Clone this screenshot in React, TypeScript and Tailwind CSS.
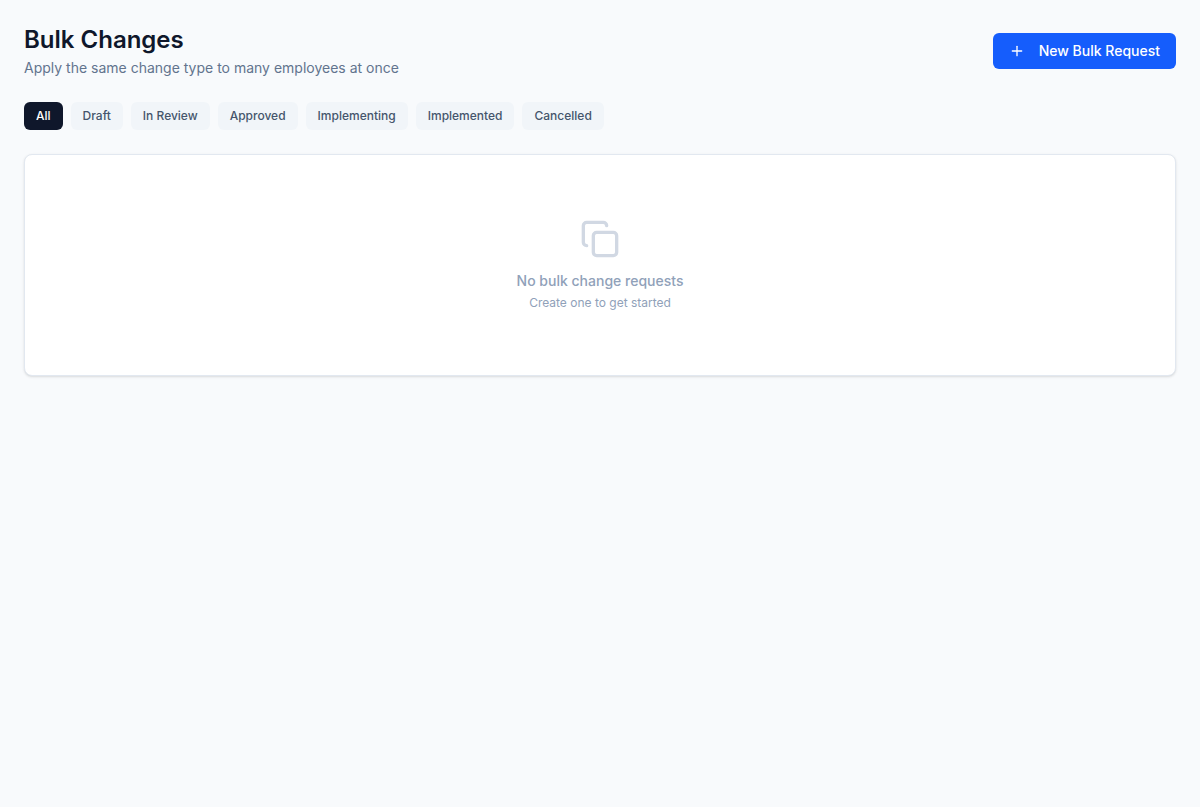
import React, { useState } from 'react';
import { Copy, Plus } from 'lucide-react';

const STATUSES = ['All', 'Draft', 'In Review', 'Approved', 'Implementing', 'Implemented', 'Cancelled'];

const App: React.FC = () => {
  const [status, setStatus] = useState('All');

  return (
    <div className="min-h-screen bg-slate-50 p-6 font-['Inter',sans-serif] text-slate-900 antialiased">
      <header className="flex items-center justify-between">
        <div>
          <h1 className="text-2xl font-semibold">Bulk Changes</h1>
          <p className="mt-0.5 text-sm text-slate-500">Apply the same change type to many employees at once</p>
        </div>
        <button
          type="button"
          className="flex h-9 items-center gap-3.5 rounded-md bg-blue-600 px-4 text-sm font-medium text-white hover:bg-blue-700"
        >
          <Plus size={16} />
          New Bulk Request
        </button>
      </header>

      <div className="mt-6 flex flex-wrap gap-2">
        {STATUSES.map((name) => (
          <button
            key={name}
            type="button"
            aria-pressed={status === name}
            onClick={() => setStatus(name)}
            className={`rounded-md px-3 py-1.5 text-xs font-medium transition-colors ${
              status === name ? 'bg-slate-900 text-white' : 'bg-slate-100 text-slate-600 hover:bg-slate-200'
            }`}
          >
            {name}
          </button>
        ))}
      </div>

      <main className="mt-6 flex flex-col items-center rounded-lg border border-slate-200 bg-white py-16 shadow-sm">
        <Copy size={40} className="mb-3 text-[#d1d8e3]" />
        <p className="text-sm font-medium text-slate-400">No bulk change requests</p>
        <p className="mt-1 text-xs text-slate-400">Create one to get started</p>
      </main>
    </div>
  );
};

export default App;
